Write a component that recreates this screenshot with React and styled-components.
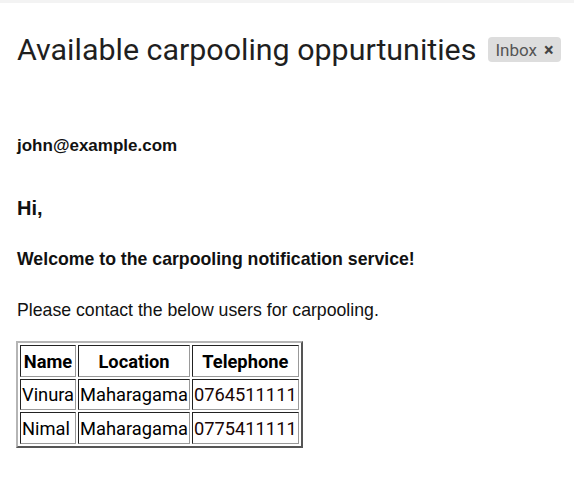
import React from "react";
import styled, { createGlobalStyle } from "styled-components";

const Global = createGlobalStyle`
  html, body { margin: 0; padding: 0; background: #fff; }
  body { font-family: "Liberation Sans", Arial, sans-serif; color: #111; }
`;

const Page = styled.div`
  width: 574px;
  height: 480px;
  border-top: 3px solid #f3f3f3;
  box-sizing: border-box;
  padding: 0 17px;
  display: flex;
  flex-direction: column;
`;

const TitleRow = styled.div`
  display: flex;
  align-items: center;
  gap: 12px;
  margin-top: 25px;
  height: 42px;
`;

const Title = styled.h1`
  margin: 0;
  font-family: Roboto, "Noto Sans", sans-serif;
  font-weight: 400;
  font-size: 30.4px;
  color: #1f1f1f;
  white-space: nowrap;
`;

const Chip = styled.span`
  display: inline-flex;
  align-items: center;
  gap: 7px;
  height: 25px;
  padding: 0 7px 0 7px;
  background: #dddddd;
  border-radius: 4px;
  font-family: Roboto, "Noto Sans", sans-serif;
  font-size: 17px;
  color: #555;
  margin-top: 1px;
`;

const ChipClose = styled.span`
  font-size: 18px;
  font-weight: 700;
  color: #444;
  line-height: 1;
`;

const Sender = styled.div`
  margin-top: 66px;
  font-weight: 700;
  font-size: 17px;
  color: #111;
`;

const Greeting = styled.div`
  margin-top: 41px;
  font-weight: 700;
  font-size: 20px;
`;

const Welcome = styled.div`
  margin-top: 29px;
  font-weight: 700;
  font-size: 17.7px;
`;

const Body = styled.p`
  margin: 30px 0 0;
  font-size: 17.7px;
`;

const Table = styled.table`
  margin-top: 20px;
  margin-left: -1px;
  border-collapse: separate;
  border-spacing: 2px;
  border-width: 2px;
  border-style: solid;
  border-color: #b5b5b5 #555 #555 #b5b5b5;
  font-family: Roboto, "Liberation Sans", sans-serif;
  font-size: 18.3px;
  line-height: 21px;
  color: #000;
  align-self: flex-start;
`;

const Th = styled.th`
  border-width: 1.5px;
  border-style: solid;
  border-color: #222 #999 #999 #222;
  padding: 4.5px 1px 4px;
  font-weight: 700;
`;

const Td = styled.td`
  border-width: 1.5px;
  border-style: solid;
  border-color: #222 #999 #999 #222;
  padding: 4.5px 1px 4px;
  color: ${(p) => (p.$phone ? "#1a0505" : "#000")};
`;

const rows = [
  ["Vinura", "Maharagama", "0764511111"],
  ["Nimal", "Maharagama", "0775411111"],
];

export default function App() {
  return (
    <>
      <Global />
      <Page>
        <TitleRow>
          <Title>Available carpooling oppurtunities</Title>
          <Chip>
            Inbox <ChipClose>×</ChipClose>
          </Chip>
        </TitleRow>
        <Sender>john@example.com</Sender>
        <Greeting>Hi,</Greeting>
        <Welcome>Welcome to the carpooling notification service!</Welcome>
        <Body>Please contact the below users for carpooling.</Body>
        <Table>
          <thead>
            <tr>
              <Th>Name</Th>
              <Th>Location</Th>
              <Th>Telephone</Th>
            </tr>
          </thead>
          <tbody>
            {rows.map((r) => (
              <tr key={r[0]}>
                <Td>{r[0]}</Td>
                <Td>{r[1]}</Td>
                <Td $phone>{r[2]}</Td>
              </tr>
            ))}
          </tbody>
        </Table>
      </Page>
    </>
  );
}
